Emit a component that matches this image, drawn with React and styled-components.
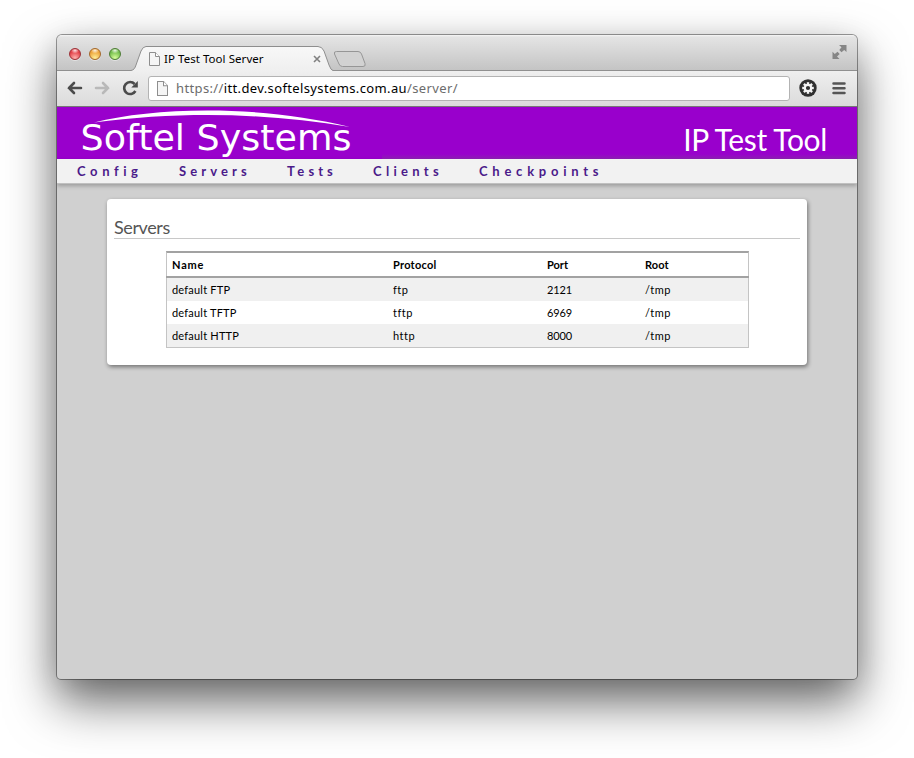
import React from 'react';
import styled, { createGlobalStyle } from 'styled-components';

const Global = createGlobalStyle`
  * { box-sizing: border-box; }
  html, body { margin: 0; background: #fff; }
  body { width: 914px; height: 758px; overflow: hidden; }
`;

const Desktop = styled.div`
  width: 914px;
  height: 758px;
  padding: 35px 57px 79px;
  overflow: hidden;
  background: #fff;
`;
const Window = styled.div`
  width: 800px;
  height: 644px;
  display: flex;
  flex-direction: column;
  overflow: hidden;
  border-radius: 5px 5px 4px 4px;
  background: #d0d0d0;
  box-shadow: 0 0 0 1px rgba(0, 0, 0, 0.38), 0 23px 50px rgba(0, 0, 0, 0.58), 0 8px 30px rgba(0, 0, 0, 0.12);
`;
const TitleBar = styled.div`
  height: 36px;
  flex: none;
  display: flex;
  background: linear-gradient(#f6f6f6 0, #e4e4e4 2px, #c4c4c4 35px);
  box-shadow: inset 0 -1px #909090;
`;
const Lights = styled.div`
  display: flex;
  gap: 8px;
  padding: 13px 0 0 12px;
  width: 74px;
  flex: none;
`;
const Light = styled.span`
  width: 12px;
  height: 12px;
  border-radius: 50%;
  border: 1px solid ${p => p.$edge};
  background: radial-gradient(ellipse 4px 3px at 50% 15%, #fffd, #fff0),
    radial-gradient(circle at 50% 90%, ${p => p.$glow}, ${p => p.$fill} 65%);
  box-shadow: 0 1px #ffffff70;
`;
const Tab = styled.div`
  display: grid;
  width: 202px;
  height: 25px;
  margin-top: 11px;
  flex: none;
  > * { grid-area: 1 / 1; }
`;
const TabContent = styled.div`
  display: flex;
  align-items: center;
  height: 25px;
  padding: 0 12px 0 18px;
`;
const TabTitle = styled.span`
  flex: 1;
  margin-left: 4px;
  font: 11.5px/16px 'Noto Sans', sans-serif;
  letter-spacing: 0.05px;
  white-space: nowrap;
  color: #000;
`;
const NewTab = styled.svg`
  margin: 15px 0 0 0;
  flex: none;
`;
const FullScreen = styled.svg`
  margin: 10px 10px 0 auto;
  flex: none;
`;
const Toolbar = styled.div`
  height: 36px;
  flex: none;
  display: flex;
  align-items: center;
  padding: 0 10px 0 9px;
  background: linear-gradient(#efefef, #dbdbdb);
  border-bottom: 1px solid #777;
`;
const Omnibox = styled.div`
  width: 642px;
  height: 25px;
  margin: 0 9px 0 9px;
  display: flex;
  align-items: center;
  padding-left: 8px;
  background: #fff;
  border: 1px solid #b3b3b3;
  border-radius: 3px;
`;
const Url = styled.span`
  margin: -2px 0 0 8px;
  font: 13px/20px 'Noto Sans', sans-serif;
  letter-spacing: 0.37px;
  white-space: nowrap;
  color: #6c6c6c;
  b { font-weight: 400; color: #000; }
`;
const NavIcon = styled.svg`
  flex: none;
  margin: -1px ${p => p.$gap || 0}px 0 0;
`;
const Banner = styled.header`
  height: 52px;
  flex: none;
  display: flex;
  justify-content: space-between;
  background: #9900cc;
`;
const Logo = styled.svg`
  display: block;
  flex: none;
`;
const BannerSide = styled.div`
  flex: 1;
  height: 52px;
  padding: 12px 30px 0 0;
  text-align: right;
  font: 30px/40px Lato, sans-serif;
  letter-spacing: -0.35px;
  color: #fff;
  background: linear-gradient(#9900cc 47px, #8d20b4);
`;
const Menu = styled.nav`
  height: 25px;
  flex: none;
  display: flex;
  padding-left: 20px;
  background: #f2f2f2;
  border-bottom: 1px solid #c0c0c0;
  box-shadow: 0 2px 4px rgba(0, 0, 0, 0.25);
`;
const MenuItem = styled.a`
  width: ${p => p.$w}px;
  font: 700 13px/24px Lato, sans-serif;
  letter-spacing: ${p => p.$ls}px;
  white-space: nowrap;
  color: #4b1b8a;
`;
const Card = styled.main`
  width: 700px;
  height: 166px;
  margin: 15px auto 0;
  padding: 18px 7px 0;
  flex: none;
  background: #fff;
  border-radius: 4px;
  box-shadow: 1px 2px 4px rgba(0, 0, 0, 0.45);
`;
const Heading = styled.h1`
  margin: 0;
  height: 22px;
  border-bottom: 1px solid #c8c8c8;
  font: 18px/20px Lato, sans-serif;
  letter-spacing: -0.4px;
  color: #555;
`;
const Table = styled.div`
  width: 583px;
  height: 97px;
  margin: 12px 0 0 52px;
  border: 1px solid #c4c4c4;
  border-top: 2px solid #a2a2a2;
`;
const Row = styled.div`
  display: grid;
  grid-template-columns: 221px 154px 98px 1fr;
  margin: 0;
  padding-left: 5px;
  height: 23px;
  font: 11px/24px Lato, sans-serif;
  color: #000;
  background: ${p => (p.$shaded ? '#f0f0f0' : '#fff')};
`;
const HeadRow = styled(Row)`
  height: 25px;
  margin: 0 -1px;
  padding-left: 6px;
  background: none;
  border-bottom: 2px solid #a2a2a2;
  font-weight: 700;
`;
const Cell = styled.span`
  letter-spacing: ${p => p.$ls || 0}px;
`;

const Page = ({ w, h }) => (
  <svg width={w} height={h} viewBox="0 0 11 14" preserveAspectRatio="none">
    <path d="M.5.5H6.5L10.5 4.5V13.5H.5Z" fill="#f5f5f5" stroke="#8e8e8e" />
    <path d="M6.5.5V4.5H10.5" fill="#fff" stroke="#8e8e8e" />
  </svg>
);

const lights = [
  ['#9c3036', '#e34048', '#ffb4b0'],
  ['#a4682a', '#eda43a', '#fff09a'],
  ['#4d7c34', '#73bd4c', '#d9ff9c'],
];
const menu = [
  ['Config', 102, 4.6],
  ['Servers', 108, 4.1],
  ['Tests', 86, 4.1],
  ['Clients', 106, 4.3],
  ['Checkpoints', 140, 4.75],
];
const headings = [['Name', 0.8], ['Protocol', 0.25], ['Port', 0], ['Root', 0.1]];
const rows = [
  ['default FTP', 'ftp', '2121', '/tmp'],
  ['default TFTP', 'tftp', '6969', '/tmp'],
  ['default HTTP', 'http', '8000', '/tmp'],
];
const spacing = [0.2, 0.5, -0.15, 0.5];
const teeth = [0, 45, 90, 135, 180, 225, 270, 315];

export default function App() {
  return (
    <Desktop>
      <Global />
      <Window>
        <TitleBar>
          <Lights>
            {lights.map(([e, f, g]) => <Light key={e} $edge={e} $fill={f} $glow={g} />)}
          </Lights>
          <Tab>
            <svg width="202" height="25">
              <defs>
                <linearGradient id="tab" x2="0" y2="1">
                  <stop stopColor="#f8f8f8" />
                  <stop offset="1" stopColor="#efefef" />
                </linearGradient>
              </defs>
              <path d="M0 25V24.5C3 24 4 22 5 19L10 5Q12 .5 15 .5H187Q191 .5 193 5L198 19Q200 24.5 202 24.5V25Z" fill="url(#tab)" />
              <path d="M0 24.5C3 24 4 22 5 19L10 5Q12 .5 15 .5H187Q191 .5 193 5L198 19Q200 24.5 202 24.5" fill="none" stroke="#8e8e8e" />
            </svg>
            <TabContent>
              <Page w={11} h={14} />
              <TabTitle>IP Test Tool Server</TabTitle>
              <svg width="8" height="8"><path d="M1 1L7 7M7 1L1 7" stroke="#808080" strokeWidth="1.6" /></svg>
            </TabContent>
          </Tab>
          <NewTab width="34" height="18">
            <path d="M3.500 1.500H25Q27.500 1.500 28.500 4L32 13.500Q33 16.500 30 16.500H9.500Q7 16.500 6 14L1.500 4Q.5 1.500 3.500 1.500Z" fill="#d2d2d2" stroke="#969696" />
          </NewTab>
          <FullScreen width="15" height="14" viewBox="0 0 15 14">
            <path d="M7 0H14.500V7L12.200 4.900L9.500 7.200L7.300 5L9.500 2.300ZM.5 6.800L2.800 9L5.500 6.700L7.700 8.900L5 11.500L7.500 14H.5Z" fill="#868686" />
          </FullScreen>
        </TitleBar>
        <Toolbar>
          <NavIcon width="17" height="16" $gap={11}>
            <path d="M15 8H3M8 3L3 8L8 13" fill="none" stroke="#4b4b4b" strokeWidth="2.600" strokeLinecap="round" />
          </NavIcon>
          <NavIcon width="17" height="16" $gap={11}>
            <path d="M2 8H14M9 3L14 8L9 13" fill="none" stroke="#b9b9b9" strokeWidth="2.600" strokeLinecap="round" />
          </NavIcon>
          <NavIcon width="17" height="16">
            <path d="M13.400 11A6 6 0 1 1 12.600 4" fill="none" stroke="#4b4b4b" strokeWidth="2.600" />
            <path d="M15.800 1V7.500H9.300Z" fill="#4b4b4b" />
          </NavIcon>
          <Omnibox>
            <Page w={11} h={15} />
            <Url>https://<b>itt.dev.softelsystems.com.au</b>/server/</Url>
          </Omnibox>
          <NavIcon width="18" height="18" viewBox="-9 -9 18 18" $gap={15}>
            <circle r="8.700" fill="#303030" />
            {teeth.map(a => (
              <rect key={a} x="-1.200" y="-5.800" width="2.400" height="3" fill="#f4f4f4" transform={`rotate(${a})`} />
            ))}
            <circle r="3.200" fill="none" stroke="#f4f4f4" strokeWidth="2.200" />
          </NavIcon>
          <NavIcon width="14" height="14">
            <path d="M1.500 2.500H12.500M1.500 7.200H12.500M1.500 12H12.500" stroke="#555" strokeWidth="2.500" strokeLinecap="round" />
          </NavIcon>
        </Toolbar>
        <Banner>
          <Logo width="325" height="52">
            <path d="M37 15.500C100 -.5 205 -2 293 20C210 6 125 4 37 15.500Z" fill="#fff" />
            <text x="23.500" y="43" fontFamily="'DejaVu Sans', sans-serif" fontSize="36" textLength="271" lengthAdjust="spacingAndGlyphs" fill="#fff">Softel Systems</text>
          </Logo>
          <BannerSide>IP Test Tool</BannerSide>
        </Banner>
        <Menu>
          {menu.map(([t, w, ls]) => <MenuItem key={t} $w={w} $ls={ls}>{t}</MenuItem>)}
        </Menu>
        <Card>
          <Heading>Servers</Heading>
          <Table>
            <HeadRow>
              {headings.map(([t, ls]) => <Cell key={t} $ls={ls}>{t}</Cell>)}
            </HeadRow>
            {rows.map((r, i) => (
              <Row key={r[0]} $shaded={i % 2 === 0}>
                {r.map((c, j) => <Cell key={j} $ls={spacing[j]}>{c}</Cell>)}
              </Row>
            ))}
          </Table>
        </Card>
      </Window>
    </Desktop>
  );
}
